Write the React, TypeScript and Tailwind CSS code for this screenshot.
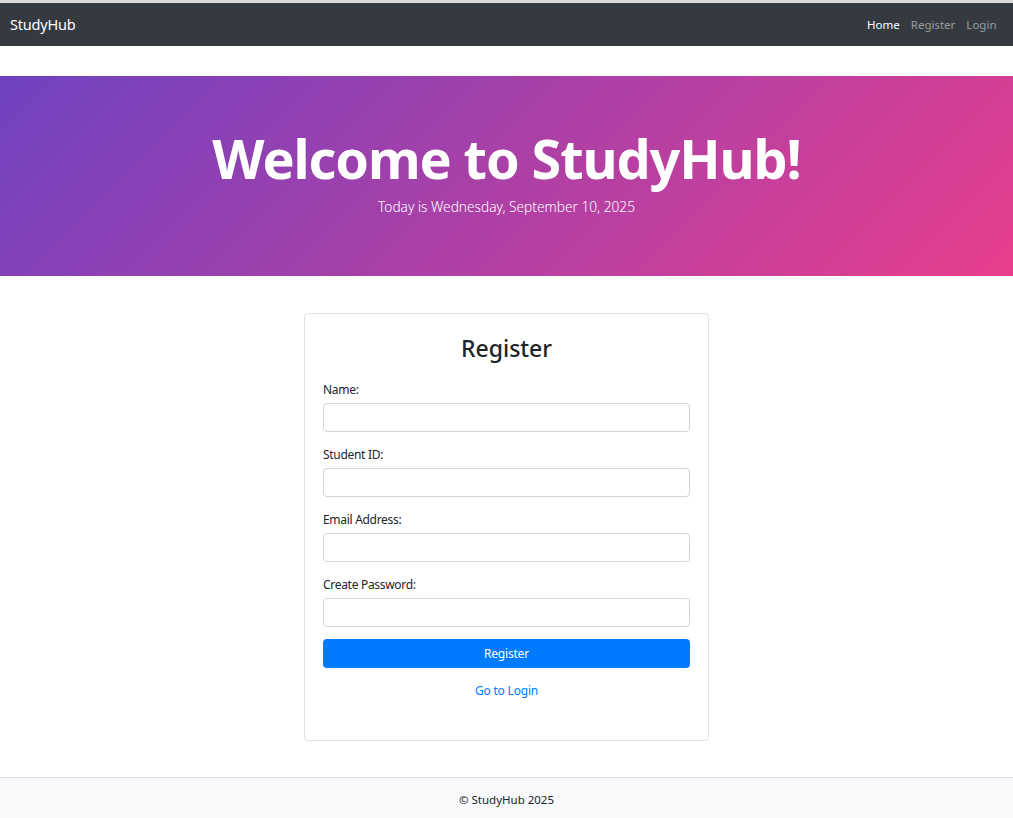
import React from "react";

const font = { fontFamily: '"Noto Sans", "Open Sans", Arial, sans-serif' };

function Field({ label, type = "text" }: { label: string; type?: string }) {
  return (
    <div className="mb-[13px] flex flex-col">
      <label className="mb-[3px] h-[20px] text-[12px] leading-[20px] tracking-[-0.3px] text-[#212529]">{label}</label>
      <input
        type={type}
        className="h-[29px] w-full rounded-[4px] border border-[#ced4da] bg-white px-2 text-[13px] outline-none"
      />
    </div>
  );
}

export default function App() {
  return (
    <div className="flex min-h-[818px] flex-col bg-white text-[#212529]" style={font}>
      <div className="h-[3px] bg-[#dcdcdc]" />
      <nav className="flex h-[43px] items-center justify-between bg-[#343a40] pl-[10px] pr-[11px] pt-[1px]">
        <span className="text-[14.5px] tracking-[-0.2px] text-white">StudyHub</span>
        <div className="flex items-center text-[11.5px]">
          <a className="px-[5.5px] text-white">Home</a>
          <a className="px-[5.5px] text-[#9a9da0]">Register</a>
          <a className="px-[5.5px] text-[#9a9da0]">Login</a>
        </div>
      </nav>

      <div className="mt-[30px] flex h-[200px] flex-col items-center justify-center bg-[linear-gradient(135deg,#6f42c1,#e83e8c)] pb-[8px] text-white">
        <h1 className="text-[54px] font-bold leading-[64px] tracking-[-1.1px]">Welcome to StudyHub!</h1>
        <p className="mt-[6px] text-[13.7px] font-light leading-[22px]">Today is Wednesday, September 10, 2025</p>
      </div>

      <div className="flex flex-1 justify-center pt-[37px] pb-[36px]">
        <div className="w-[405px] rounded-[4px] border border-[#dee2e6] px-[18px] pt-[18px] pb-[38px]">
          <h3 className="mb-[16px] text-center text-[23px] font-medium leading-[32px]">Register</h3>
          <Field label="Name:" />
          <Field label="Student ID:" />
          <Field label="Email Address:" type="email" />
          <Field label="Create Password:" type="password" />
          <button className="-mt-[1px] h-[29px] w-full rounded-[4px] bg-[#007bff] pt-[1px] text-[12px] tracking-[-0.2px] text-white">
            Register
          </button>
          <div className="mt-[13px] text-center text-[12px] leading-[20px] tracking-[-0.2px]">
            <a className="text-[#007bff]">Go to Login</a>
          </div>
        </div>
      </div>

      <footer className="flex h-[41px] items-center justify-center border-t border-[#dee2e6] bg-[#f8f9fa] pt-[3px] text-[11.5px]">
        © StudyHub 2025
      </footer>
    </div>
  );
}
